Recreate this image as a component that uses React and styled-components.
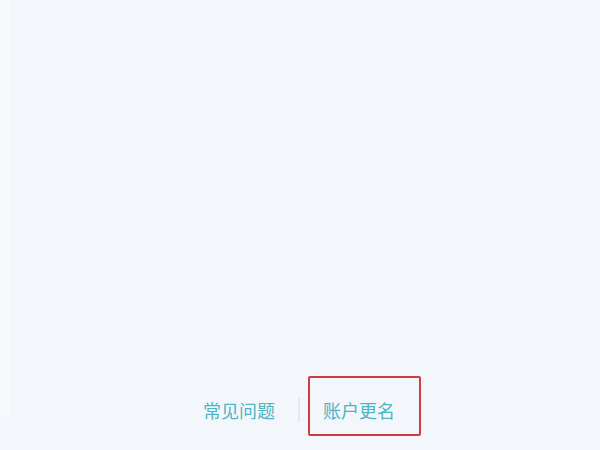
import React from 'react';
import styled, { createGlobalStyle } from 'styled-components';

const GlobalStyle = createGlobalStyle`
  html, body {
    margin: 0;
    padding: 0;
    background: #f3f7fb;
  }
  body {
    font-family: "Noto Sans CJK SC", "Noto Sans", sans-serif;
  }
`;

const Page = styled.div`
  position: relative;
  width: 600px;
  height: 450px;
  display: flex;
  flex-direction: column;
  justify-content: flex-end;
  background: #f3f7fb;
  overflow: hidden;
`;

const EdgeStrip = styled.div`
  position: absolute;
  top: 0;
  left: 0;
  width: 12px;
  height: 415px;
  background: #f6f9fc;
  border-right: 1px solid #eef2f7;
`;

const Footer = styled.nav`
  display: flex;
  align-items: center;
  justify-content: center;
  gap: 23px;
  height: 40px;
  margin-bottom: 20px;
  padding-right: 2px;
`;

const Link = styled.a`
  position: relative;
  font-size: 18px;
  line-height: 24px;
  color: #4db4c2;
  text-decoration: none;
`;

const Divider = styled.span`
  width: 2px;
  height: 24px;
  background: #e6eaee;
`;

const Highlight = styled.span`
  position: absolute;
  left: -15px;
  top: -22px;
  width: 109px;
  height: 56px;
  border: 2px solid #d23b3f;
  border-radius: 2px;
  pointer-events: none;
`;

export default function App() {
  return (
    <>
      <GlobalStyle />
      <Page>
        <EdgeStrip />
        <Footer>
          <Link href="#">常见问题</Link>
          <Divider />
          <Link href="#">
            账户更名
            <Highlight />
          </Link>
        </Footer>
      </Page>
    </>
  );
}
